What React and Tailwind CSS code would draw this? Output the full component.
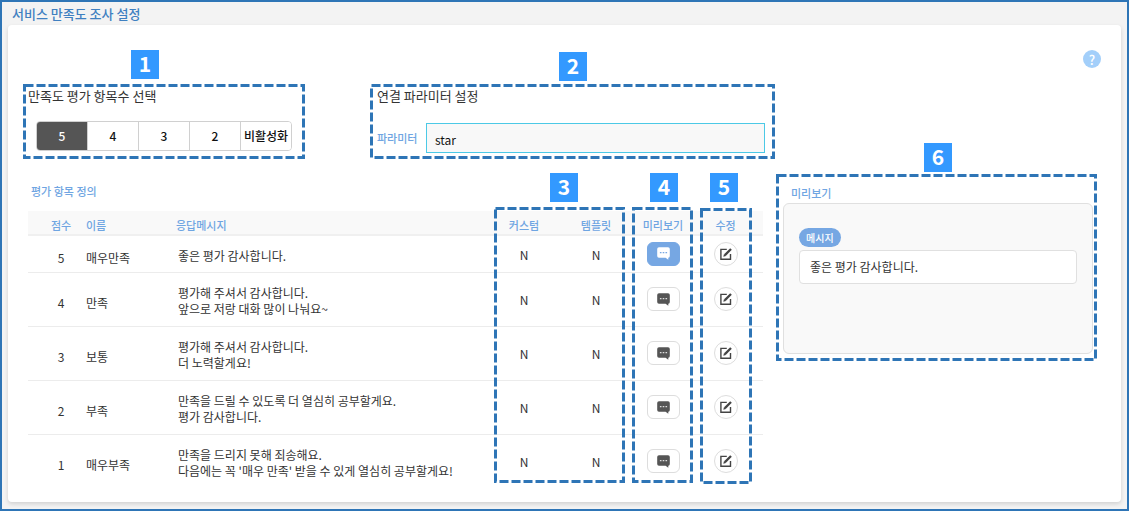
const ROWS = [
  { score: 5, name: '매우만족', lines: ['좋은 평가 감사합니다.'], active: true },
  { score: 4, name: '만족', lines: ['평가해 주셔서 감사합니다.', '앞으로 저랑 대화 많이 나눠요~'] },
  { score: 3, name: '보통', lines: ['평가해 주셔서 감사합니다.', '더 노력할게요!'] },
  { score: 2, name: '부족', lines: ['만족을 드릴 수 있도록 더 열심히 공부할게요.', '평가 감사합니다.'] },
  { score: 1, name: '매우부족', lines: ['만족을 드리지 못해 죄송해요.', "다음에는 꼭 '매우 만족' 받을 수 있게 열심히 공부할게요!"] },
];

const OPTIONS = ['5', '4', '3', '2', '비활성화'];

function Outline() {
  return (
    <svg className="pointer-events-none absolute inset-0 h-full w-full p-[1.5px]" aria-hidden="true" overflow="visible">
      <rect width="100%" height="100%" fill="none" stroke="#2e75b6" strokeWidth="3" strokeDasharray="9 3" />
    </svg>
  );
}

function Badge({ n, className }) {
  return (
    <span className={`absolute flex h-[29px] w-7 items-center justify-center bg-[#3399ff] pb-0.5 text-[21px] leading-none font-bold text-white ${className}`}>
      {n}
    </span>
  );
}

function ChatIcon({ dots }) {
  return (
    <svg width="13" height="13" viewBox="0 0 13 13" aria-hidden="true">
      <path d="M2 .3h9a1.8 1.8 0 0 1 1.8 1.8v6.8a1.8 1.8 0 0 1-1.5 1.8v2.1L8.6 10.8H2A1.8 1.8 0 0 1 .2 9V2.1A1.8 1.8 0 0 1 2 .3z" fill="currentColor" />
      <path d="M2.9 5.6h1.6M5.7 5.6h1.6M8.5 5.6h1.6" stroke={dots} strokeWidth="1.4" />
    </svg>
  );
}

function EditIcon() {
  return (
    <svg width="12" height="12" viewBox="0 0 12 12" fill="none" stroke="#444" aria-hidden="true">
      <path d="M6.8 1.4H.9v9.8h9.6V6" strokeWidth="1.4" />
      <path d="M4.9 7.1 11 1" strokeWidth="2.3" />
      <path d="M3.3 8.8l.7-2.7 2 2z" fill="#444" stroke="none" />
    </svg>
  );
}

export default function App() {
  return (
    <div className="border-2 border-[#2e75b6] bg-[#f3f3f3] px-1.5 pb-[7px] font-['Noto_Sans_CJK_KR',sans-serif] text-[12px] leading-4 text-[#333]">
      <h1 className="h-[23px] pl-1 text-[13px] leading-[23px] font-medium text-[#3f80c1]">서비스 만족도 조사 설정</h1>
      <main className="rounded-sm bg-white pr-6 pb-3.5 pl-[15px] shadow-[0_2px_4px_rgba(0,0,0,0.14)]">
        <div className="flex h-[59px] items-start justify-end pt-[25px]">
          <button type="button" aria-label="도움말" className="-mr-1 flex size-[18px] items-center justify-center rounded-full bg-[#a3cffa] text-[13px] leading-none font-medium text-white">
            ?
          </button>
        </div>

        <div className="grid grid-cols-[minmax(0,1fr)_321px]">
          <div>
            <div className="flex gap-[65px] pr-px">
              <section className="relative h-[75px] w-[282px] shrink-0 pt-[3px] pl-[5px]">
                <Outline />
                <Badge n="1" className="-top-[34px] left-[108px]" />
                <h2 className="text-[13px] leading-[18px]">만족도 평가 항목수 선택</h2>
                <div role="group" aria-label="만족도 평가 항목수 선택" className="mt-4 ml-2 flex h-[30px] w-64 divide-x divide-[#d0d0d0] overflow-hidden rounded border border-[#d0d0d0]">
                  {OPTIONS.map((o, i) => (
                    <button
                      key={o}
                      type="button"
                      aria-pressed={i === 0}
                      className={`flex-1 basis-0 font-medium whitespace-nowrap ${i === 0 ? 'bg-[#555] text-white' : 'bg-white text-[#111]'}`}
                    >
                      {o}
                    </button>
                  ))}
                </div>
              </section>

              <section className="relative h-[75px] min-w-0 flex-1 pt-[3px] pr-2.5 pl-[7px]">
                <Outline />
                <Badge n="2" className="-top-8 left-[189px]" />
                <h2 className="text-[13px] leading-[18px]">연결 파라미터 설정</h2>
                <div className="mt-[18px] flex items-center">
                  <label htmlFor="param" className="w-[49px] shrink-0 text-[11px] font-medium text-[#6fa5e2]">파라미터</label>
                  <input id="param" type="text" defaultValue="star" className="h-[30px] min-w-0 flex-1 border border-[#4cc9e6] bg-[#f8f8f8] px-2 pt-0.5 text-[12px] text-[#111] outline-none" />
                </div>
              </section>
            </div>

            <section className="mt-6 pr-[13px] pl-[5px]">
              <h2 className="pl-[3px] text-[11px] font-medium text-[#6fa5e2]">평가 항목 정의</h2>
              <div className="relative mt-3">
                <table className="w-full table-fixed border-collapse">
                  <colgroup>
                    <col className="w-[58px]" />
                    <col className="w-[90px]" />
                    <col />
                    <col className="w-[72px]" />
                    <col className="w-[72px]" />
                    <col className="w-[62px]" />
                    <col className="w-[69px]" />
                  </colgroup>
                  <thead>
                    <tr className="h-6 border-b-2 border-[#f0f0f0] bg-[#f9f9f9] text-[11px] text-[#6fa5e2] [&>th]:p-0 [&>th]:pt-1 [&>th]:font-medium">
                      <th scope="col"><span className="pl-2">점수</span></th>
                      <th scope="col" className="text-left">이름</th>
                      <th scope="col" className="text-left">응답메시지</th>
                      <th scope="col">커스텀</th>
                      <th scope="col">템플릿</th>
                      <th scope="col">미리보기</th>
                      <th scope="col"><span className="pr-1.5">수정</span></th>
                    </tr>
                  </thead>
                  <tbody>
                    {ROWS.map((r) => (
                      <tr key={r.score} className={`border-b border-[#ececec] last:border-b-0 ${r.lines.length > 1 ? 'h-[54px]' : 'h-[37px]'}`}>
                        <td className="pt-2 pl-2 text-center">{r.score}</td>
                        <td className="pt-2">{r.name}</td>
                        <td className="pt-1 pl-0.5 whitespace-nowrap">
                          {r.lines.map((l) => (
                            <p key={l}>{l}</p>
                          ))}
                        </td>
                        <td className="pt-0.5 text-center">N</td>
                        <td className="pt-0.5 text-center">N</td>
                        <td>
                          <button
                            type="button"
                            aria-label={`${r.name} 미리보기`}
                            className={`mx-auto flex h-6 w-[33px] items-center justify-center rounded-md border ${r.active ? 'border-[#76a7e3] bg-[#76a7e3] text-white' : 'border-[#ddd] bg-white text-[#555]'}`}
                          >
                            <ChatIcon dots={r.active ? '#76a7e3' : '#ddd'} />
                          </button>
                        </td>
                        <td className="pr-1.5">
                          <button type="button" aria-label={`${r.name} 수정`} className="mx-auto flex size-6 items-center justify-center rounded-full border border-[#ddd] bg-white">
                            <EditIcon />
                          </button>
                        </td>
                      </tr>
                    ))}
                  </tbody>
                </table>
                <div className="pointer-events-none absolute -top-1 right-[138px] h-[276px] w-[131px]">
                  <Outline />
                  <Badge n="3" className="-top-[34px] left-14" />
                </div>
                <div className="pointer-events-none absolute -top-1 right-[70px] h-[276px] w-[61px]">
                  <Outline />
                  <Badge n="4" className="-top-[34px] left-[18px]" />
                </div>
                <div className="pointer-events-none absolute -top-[3px] right-[11px] h-[276px] w-[52px]">
                  <Outline />
                  <Badge n="5" className="-top-[35px] left-2.5" />
                </div>
              </div>
            </section>
          </div>

          <section className="relative mt-[90px] h-[187px] self-start px-[7px] pt-[11px]">
            <Outline />
            <Badge n="6" className="-top-[31px] left-[148px]" />
            <h2 className="pl-2 text-[11px] font-medium text-[#6fa5e2]">미리보기</h2>
            <div className="mt-0.5 mr-[-3px] flex h-[151px] flex-col items-start gap-[3px] rounded-md border border-[#e0e0e0] bg-[#f9f9f9] px-[15px] pt-6">
              <span className="rounded-full bg-[#76a7e3] px-[7px] text-[10px] leading-[19px] font-medium text-white">메시지</span>
              <p className="h-[34px] w-full rounded border border-[#e0e0e0] bg-white px-2.5 leading-8">좋은 평가 감사합니다.</p>
            </div>
          </section>
        </div>
      </main>
    </div>
  );
}
